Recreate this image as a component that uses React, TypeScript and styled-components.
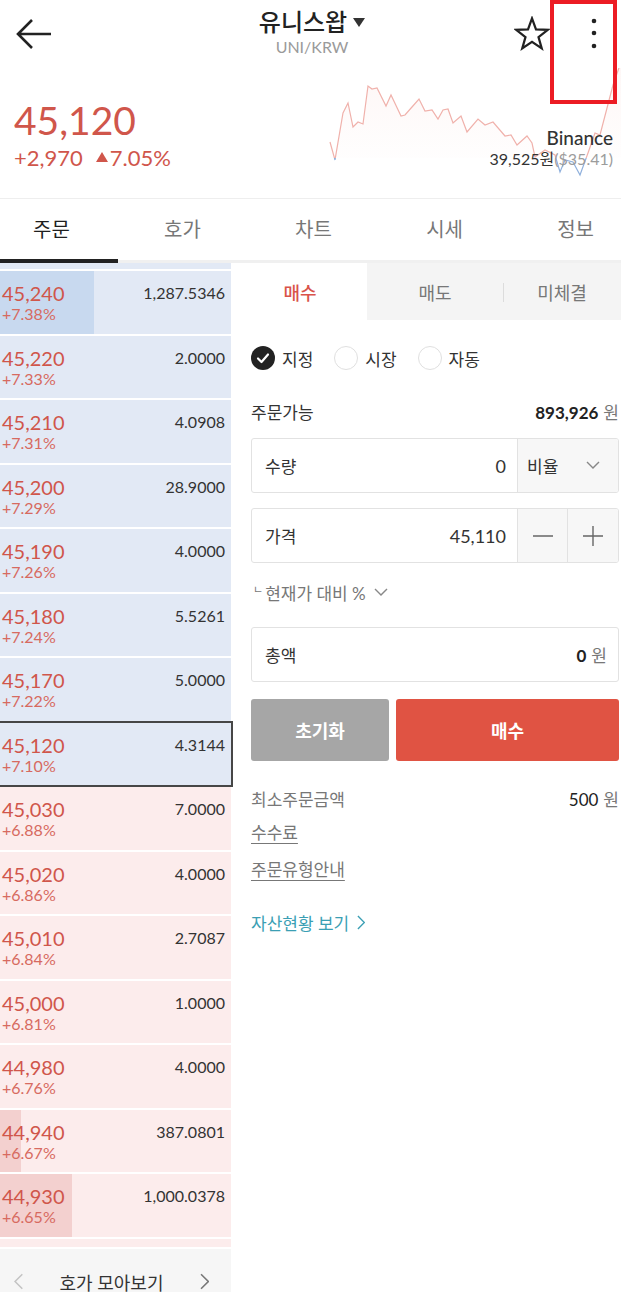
import React from "react";
import styled, { createGlobalStyle, css } from "styled-components";

const GlobalStyle = createGlobalStyle`
  html, body {
    margin: 0;
    padding: 0;
    background: #fff;
  }
  body {
    font-family: Lato, "Noto Sans CJK KR", "Noto Sans", sans-serif;
    color: #222;
  }
  * {
    box-sizing: border-box;
  }
`;

const Page = styled.div`
  position: relative;
  width: 621px;
  height: 1292px;
  overflow: hidden;
  background: #fff;
`;

const Highlight = styled.div`
  position: absolute;
  left: 550px;
  top: 0;
  width: 67px;
  height: 104px;
  border: 4px solid #ec1c24;
  pointer-events: none;
  z-index: 5;
`;

/* ---------- header ---------- */

const TopBar = styled.header`
  display: grid;
  grid-template-columns: 1fr auto 1fr;
  align-items: center;
  height: 68px;
  padding: 0 21px 0 16px;
`;

const IconButton = styled.div`
  display: flex;
  align-items: center;
`;

const TitleBlock = styled.div`
  display: flex;
  flex-direction: column;
  align-items: center;
  padding-left: 8px;
  margin-top: -4px;
`;

const Title = styled.div`
  display: flex;
  align-items: center;
  gap: 6px;
  font-size: 24px;
  line-height: 28px;
  font-weight: 500;
  color: #222;
`;

const Caret = styled.span`
  width: 0;
  height: 0;
  border-left: 6px solid transparent;
  border-right: 6px solid transparent;
  border-top: 9px solid #333;
  margin-top: 2px;
`;

const Pair = styled.div`
  font-size: 16px;
  line-height: 20px;
  color: #9a9a9a;
  margin-top: 1px;
`;

const RightIcons = styled.div`
  display: flex;
  justify-content: flex-end;
  align-items: center;
  gap: 38px;
`;

const PriceSection = styled.section`
  display: flex;
  height: 131px;
  padding-left: 14px;
  border-bottom: 1px solid #eee;
`;

const PriceBlock = styled.div`
  display: flex;
  flex-direction: column;
  padding-top: 30px;
  color: #d0564b;
`;

const BigPrice = styled.div`
  font-size: 39px;
  line-height: 44px;
`;

const Change = styled.div`
  display: flex;
  align-items: center;
  gap: 13px;
  margin-top: 3px;
  font-size: 22px;
  line-height: 26px;
`;

const Up = styled.span`
  display: inline-flex;
  align-items: center;
  gap: 2px;

  &::before {
    content: "";
    border-left: 6px solid transparent;
    border-right: 6px solid transparent;
    border-bottom: 10px solid #d0564b;
    margin-bottom: 3px;
  }
`;

const Chart = styled.div`
  position: relative;
  margin-left: auto;
  width: 296px;
  height: 130px;

  svg {
    display: block;
  }
`;

const Exchange = styled.div`
  position: absolute;
  right: 8px;
  top: 59px;
  text-align: right;
`;

const ExchangeName = styled.div`
  font-size: 19px;
  line-height: 22px;
  font-weight: 500;
  color: #333;
`;

const ExchangePrice = styled.div`
  font-size: 16px;
  line-height: 20px;
  color: #333;

  span {
    color: #9c9c9c;
  }
`;

/* ---------- tabs ---------- */

const Tabs = styled.nav`
  display: flex;
  justify-content: space-between;
  height: 64px;
  padding: 0 27px 0 33px;
  box-shadow: inset 0 -3px 0 #f0f0f0;
`;

const Tab = styled.div<{ $active?: boolean }>`
  position: relative;
  display: flex;
  align-items: center;
  padding-bottom: 6px;
  font-size: 20px;
  color: ${(p) => (p.$active ? "#1f1f1f" : "#777")};

  ${(p) =>
    p.$active &&
    css`
      &::after {
        content: "";
        position: absolute;
        left: -33px;
        bottom: 0;
        width: 118px;
        height: 4px;
        background: #222;
      }
    `}
`;

/* ---------- order book ---------- */

const Body = styled.div`
  display: grid;
  grid-template-columns: 231px 1fr;
  column-gap: 2px;
`;

const Book = styled.div`
  display: flex;
  flex-direction: column;
  gap: 2px;
`;

const sideColors = {
  ask: { light: "#e2e9f5", dark: "#c8d9ef" },
  bid: { light: "#fcecec", dark: "#f3d0cf" },
};

type Side = "ask" | "bid";

const Slice = styled.div<{ $side: Side; $h: number }>`
  height: ${(p) => p.$h}px;
  background: ${(p) => sideColors[p.$side].light};
`;

const Row = styled.div<{ $side: Side; $bar: number; $current?: boolean }>`
  display: flex;
  justify-content: space-between;
  height: 62.5px;
  padding: 10px 6px 0 2px;
  background: linear-gradient(
    to right,
    ${(p) => sideColors[p.$side].dark} 0 ${(p) => p.$bar}px,
    ${(p) => sideColors[p.$side].light} ${(p) => p.$bar}px 100%
  );

  ${(p) =>
    p.$current &&
    css`
      position: relative;
      z-index: 1;
      outline: 2px solid #464646;
      outline-offset: 0px;
    `}
`;

const PriceCell = styled.div`
  display: flex;
  flex-direction: column;
`;

const RowPrice = styled.span`
  font-size: 20px;
  line-height: 24px;
  color: #d0564b;
`;

const RowPct = styled.span`
  font-size: 16px;
  line-height: 18px;
  color: #d76a60;
`;

const RowQty = styled.span`
  font-size: 16px;
  line-height: 24px;
  color: #333;
`;

const BookFooter = styled.div`
  display: flex;
  justify-content: space-between;
  align-items: flex-start;
  height: 70px;
  padding: 24px 22px 0 14px;
  background: #f6f6f6;
  font-size: 18px;
  line-height: 20px;
  color: #333;
`;

/* ---------- order panel ---------- */

const Panel = styled.div`
  display: flex;
  flex-direction: column;
`;

const SideTabs = styled.div`
  display: grid;
  grid-template-columns: 134px 136px 1fr;
  height: 57px;
`;

const SideTab = styled.div<{ $active?: boolean; $divider?: boolean }>`
  position: relative;
  display: flex;
  align-items: center;
  justify-content: center;
  font-size: 18px;
  background: ${(p) => (p.$active ? "#fff" : "#f4f4f4")};
  color: ${(p) => (p.$active ? "#d9534a" : "#777")};
  font-weight: ${(p) => (p.$active ? 500 : 400)};

  ${(p) =>
    p.$divider &&
    css`
      &::before {
        content: "";
        position: absolute;
        left: 0;
        top: 20px;
        width: 1px;
        height: 19px;
        background: #dcdcdc;
      }
    `}
`;

const Form = styled.div`
  display: flex;
  flex-direction: column;
  padding: 0 2px 0 18px;
`;

const Choices = styled.div`
  display: flex;
  align-items: center;
  height: 36px;
  margin-top: 20px;
`;

const Choice = styled.div`
  display: flex;
  align-items: center;
  gap: 7px;
  margin-right: 21px;
  font-size: 17px;
  color: #333;
`;

const Radio = styled.span<{ $on?: boolean }>`
  display: flex;
  align-items: center;
  justify-content: center;
  width: 24px;
  height: 24px;
  border-radius: 50%;
  background: ${(p) => (p.$on ? "#222" : "#fff")};
  border: ${(p) => (p.$on ? "none" : "1px solid #e0e0e0")};
`;

const InfoRow = styled.div<{ $gap: number; $muted?: boolean }>`
  display: flex;
  justify-content: space-between;
  align-items: center;
  height: 26px;
  margin-top: ${(p) => p.$gap}px;
  font-size: 17px;
  color: ${(p) => (p.$muted ? "#777" : "#333")};
`;

const Amount = styled.span<{ $weight?: number }>`
  color: #222;
  font-size: 17px;
  font-weight: ${(p) => p.$weight ?? 400};

  small {
    font-size: 17px;
    font-weight: 400;
    color: #777;
    margin-left: 5px;
  }
`;

const Field = styled.div<{ $gap: number }>`
  display: flex;
  height: 55px;
  margin-top: ${(p) => p.$gap}px;
  border: 1px solid #e2e2e2;
  border-radius: 3px;
  overflow: hidden;
`;

const FieldMain = styled.div`
  flex: 1;
  display: flex;
  align-items: center;
  justify-content: space-between;
  padding: 0 11px 0 13px;
  font-size: 17px;
  color: #333;
`;

const FieldValue = styled.span`
  font-size: 18px;
  color: #333;
`;

const FieldSide = styled.div<{ $w: number; $spread?: boolean }>`
  display: flex;
  align-items: center;
  justify-content: ${(p) => (p.$spread ? "space-between" : "center")};
  width: ${(p) => p.$w}px;
  padding: ${(p) => (p.$spread ? "0 18px 0 9px" : "0")};
  background: #f7f7f7;
  border-left: 1px solid #e2e2e2;
  font-size: 17px;
  color: #333;
`;

const Compare = styled.div`
  display: flex;
  align-items: center;
  gap: 8px;
  height: 24px;
  margin-top: 17px;
  font-size: 17px;
  color: #777;
`;

const CompareMark = styled.span`
  font-size: 11px;
  line-height: 11px;
  align-self: flex-start;
  margin: 4px -6px 0 2px;
`;

const Buttons = styled.div`
  display: grid;
  grid-template-columns: 138px 1fr;
  gap: 7px;
  height: 62px;
  margin-top: 17px;
`;

const Button = styled.div<{ $tone: "gray" | "red" }>`
  display: flex;
  align-items: center;
  justify-content: center;
  border-radius: 3px;
  font-size: 18px;
  font-weight: 700;
  color: #fff;
  background: ${(p) => (p.$tone === "red" ? "#e05343" : "#a6a6a6")};
`;

const LinkText = styled.div<{ $gap: number }>`
  height: 24px;
  margin-top: ${(p) => p.$gap}px;
  font-size: 17px;
  line-height: 24px;
  color: #777;
  text-decoration: underline;
  text-underline-offset: 4px;
`;

const AssetLink = styled.div`
  display: flex;
  align-items: center;
  gap: 8px;
  height: 24px;
  margin-top: 28px;
  font-size: 17px;
  color: #3b9fb4;
`;

/* ---------- data ---------- */

type BookRow = { price: string; pct: string; qty: string; side: Side; bar: number; current?: boolean };

const rows: BookRow[] = [
  { price: "45,240", pct: "+7.38%", qty: "1,287.5346", side: "ask", bar: 94 },
  { price: "45,220", pct: "+7.33%", qty: "2.0000", side: "ask", bar: 0 },
  { price: "45,210", pct: "+7.31%", qty: "4.0908", side: "ask", bar: 0 },
  { price: "45,200", pct: "+7.29%", qty: "28.9000", side: "ask", bar: 0 },
  { price: "45,190", pct: "+7.26%", qty: "4.0000", side: "ask", bar: 0 },
  { price: "45,180", pct: "+7.24%", qty: "5.5261", side: "ask", bar: 0 },
  { price: "45,170", pct: "+7.22%", qty: "5.0000", side: "ask", bar: 0 },
  { price: "45,120", pct: "+7.10%", qty: "4.3144", side: "ask", bar: 0, current: true },
  { price: "45,030", pct: "+6.88%", qty: "7.0000", side: "bid", bar: 0 },
  { price: "45,020", pct: "+6.86%", qty: "4.0000", side: "bid", bar: 0 },
  { price: "45,010", pct: "+6.84%", qty: "2.7087", side: "bid", bar: 0 },
  { price: "45,000", pct: "+6.81%", qty: "1.0000", side: "bid", bar: 0 },
  { price: "44,980", pct: "+6.76%", qty: "4.0000", side: "bid", bar: 0 },
  { price: "44,940", pct: "+6.67%", qty: "387.0801", side: "bid", bar: 21 },
  { price: "44,930", pct: "+6.65%", qty: "1,000.0378", side: "bid", bar: 72 },
];

// sparkline points in page coordinates
const spark: [number, number][] = [
  [330, 142], [335, 160], [343, 113], [348, 103], [353, 127], [358, 122], [363, 124],
  [368, 86], [372, 89], [377, 88], [386, 106], [391, 95], [401, 116], [405, 115],
  [412, 107], [419, 99], [425, 111], [432, 110], [438, 119], [443, 110], [448, 109],
  [453, 123], [461, 116], [467, 132], [478, 119], [485, 125], [493, 122], [505, 136],
  [511, 135], [517, 145], [527, 136], [532, 143], [535, 157], [545, 150], [555, 155],
  [560, 172], [565, 160], [573, 162], [580, 175], [588, 153], [595, 133], [600, 135],
  [613, 85], [621, 62],
];

const CHART_X = 325;
const CHART_Y = 68;
const BASE = 158 - CHART_Y;

const sparkPath = spark
  .map(([x, y], i) => `${i === 0 ? "M" : "L"}${x - CHART_X} ${y - CHART_Y}`)
  .join(" ");

/* ---------- icons ---------- */

function BackIcon() {
  return (
    <svg width="36" height="32" viewBox="0 0 36 32" fill="none" stroke="#222" strokeWidth="2.6">
      <path d="M2 16H35M16 2L2 16L16 30" />
    </svg>
  );
}

function StarIcon() {
  return (
    <svg width="36" height="36" viewBox="-1.5 -1.5 37 37" fill="none" stroke="#222" strokeWidth="2.3" strokeLinejoin="miter">
      <path d="M17 1 L21.1 12.3 L33.2 12.7 L23.7 20.2 L27 31.8 L17 25 L7 31.8 L10.3 20.2 L0.8 12.7 L12.9 12.3 Z" />
    </svg>
  );
}

function MoreIcon() {
  return (
    <svg width="12" height="34" viewBox="0 0 12 34" fill="#222">
      <circle cx="6" cy="4" r="2.3" />
      <circle cx="6" cy="16" r="2.3" />
      <circle cx="6" cy="29" r="2.3" />
    </svg>
  );
}

function CheckIcon() {
  return (
    <svg width="24" height="24" viewBox="0 0 24 24" fill="none" stroke="#fff" strokeWidth="2.2" strokeLinecap="round" strokeLinejoin="round">
      <path d="M7 12.5L10.5 16L17 8.5" />
    </svg>
  );
}

function ChevronDown({ color = "#888", w = 14 }: { color?: string; w?: number }) {
  return (
    <svg width={w} height={w * 0.6} viewBox="0 0 14 8.4" fill="none" stroke={color} strokeWidth="1.4">
      <path d="M1 1L7 7L13 1" />
    </svg>
  );
}

function Chevron({ dir, color, h = 16 }: { dir: "left" | "right"; color: string; h?: number }) {
  return (
    <svg width={h * 0.55} height={h} viewBox="0 0 9 16" fill="none" stroke={color} strokeWidth="1.5">
      <path d={dir === "left" ? "M8 1L1 8L8 15" : "M1 1L8 8L1 15"} />
    </svg>
  );
}

function MinusIcon() {
  return (
    <svg width="20" height="20" viewBox="0 0 20 20" stroke="#666" strokeWidth="1.4">
      <path d="M0 10H20" />
    </svg>
  );
}

function PlusIcon() {
  return (
    <svg width="20" height="20" viewBox="0 0 20 20" stroke="#666" strokeWidth="1.4">
      <path d="M0 10H20M10 0V20" />
    </svg>
  );
}

function Sparkline() {
  return (
    <svg width="296" height="130" viewBox="0 0 296 130" fill="none">
      <defs>
        <clipPath id="above">
          <rect x="0" y="0" width="296" height={BASE} />
        </clipPath>
        <clipPath id="below">
          <rect x="0" y={BASE} width="296" height={130 - BASE} />
        </clipPath>
        <linearGradient id="fade" x1="0" y1="0" x2="0" y2="1">
          <stop offset="0" stopColor="#f2b7b1" stopOpacity="0.12" />
          <stop offset="1" stopColor="#f2b7b1" stopOpacity="0" />
        </linearGradient>
      </defs>
      <path d={`${sparkPath} L296 ${BASE} L5 ${BASE} Z`} fill="url(#fade)" clipPath="url(#above)" />
      <path d={sparkPath} stroke="#f0b1ab" strokeWidth="1.2" clipPath="url(#above)" />
      <path d={sparkPath} stroke="#8fb0dc" strokeWidth="1.2" clipPath="url(#below)" />
    </svg>
  );
}

export default function App() {
  return (
    <Page>
      <GlobalStyle />
      <Highlight />

      <TopBar>
        <IconButton>
          <BackIcon />
        </IconButton>
        <TitleBlock>
          <Title>
            유니스왑
            <Caret />
          </Title>
          <Pair>UNI/KRW</Pair>
        </TitleBlock>
        <RightIcons>
          <StarIcon />
          <MoreIcon />
        </RightIcons>
      </TopBar>

      <PriceSection>
        <PriceBlock>
          <BigPrice>45,120</BigPrice>
          <Change>
            <span>+2,970</span>
            <Up>7.05%</Up>
          </Change>
        </PriceBlock>
        <Chart>
          <Sparkline />
          <Exchange>
            <ExchangeName>Binance</ExchangeName>
            <ExchangePrice>
              39,525원<span>($35.41)</span>
            </ExchangePrice>
          </Exchange>
        </Chart>
      </PriceSection>

      <Tabs>
        <Tab $active>주문</Tab>
        <Tab>호가</Tab>
        <Tab>차트</Tab>
        <Tab>시세</Tab>
        <Tab>정보</Tab>
      </Tabs>

      <Body>
        <Book>
          <Slice $side="ask" $h={6} />
          {rows.map((r) => (
            <Row key={r.price} $side={r.side} $bar={r.bar} $current={r.current}>
              <PriceCell>
                <RowPrice>{r.price}</RowPrice>
                <RowPct>{r.pct}</RowPct>
              </PriceCell>
              <RowQty>{r.qty}</RowQty>
            </Row>
          ))}
          <Slice $side="bid" $h={8} />
          <BookFooter>
            <Chevron dir="left" color="#c4c4c4" h={17} />
            <span>호가 모아보기</span>
            <Chevron dir="right" color="#777" h={17} />
          </BookFooter>
        </Book>

        <Panel>
          <SideTabs>
            <SideTab $active>매수</SideTab>
            <SideTab>매도</SideTab>
            <SideTab $divider>미체결</SideTab>
          </SideTabs>

          <Form>
            <Choices>
              <Choice>
                <Radio $on>
                  <CheckIcon />
                </Radio>
                지정
              </Choice>
              <Choice>
                <Radio />
                시장
              </Choice>
              <Choice>
                <Radio />
                자동
              </Choice>
            </Choices>

            <InfoRow $gap={22}>
              <span>주문가능</span>
              <Amount $weight={700}>
                893,926<small>원</small>
              </Amount>
            </InfoRow>

            <Field $gap={14}>
              <FieldMain>
                <span>수량</span>
                <FieldValue>0</FieldValue>
              </FieldMain>
              <FieldSide $w={101} $spread>
                <span>비율</span>
                <ChevronDown />
              </FieldSide>
            </Field>

            <Field $gap={15}>
              <FieldMain>
                <span>가격</span>
                <FieldValue>45,110</FieldValue>
              </FieldMain>
              <FieldSide $w={50}>
                <MinusIcon />
              </FieldSide>
              <FieldSide $w={51}>
                <PlusIcon />
              </FieldSide>
            </Field>

            <Compare>
              <CompareMark>ㄴ</CompareMark>
              <span>현재가 대비 %</span>
              <ChevronDown color="#888" w={14} />
            </Compare>

            <Field $gap={23}>
              <FieldMain>
                <span>총액</span>
                <Amount $weight={700}>
                  0<small>원</small>
                </Amount>
              </FieldMain>
            </Field>

            <Buttons>
              <Button $tone="gray">초기화</Button>
              <Button $tone="red">매수</Button>
            </Buttons>

            <InfoRow $gap={24} $muted>
              <span>최소주문금액</span>
              <Amount>
                500<small>원</small>
              </Amount>
            </InfoRow>

            <LinkText $gap={10}>수수료</LinkText>
            <LinkText $gap={13}>주문유형안내</LinkText>

            <AssetLink>
              자산현황 보기
              <Chevron dir="right" color="#3b9fb4" h={15} />
            </AssetLink>
          </Form>
        </Panel>
      </Body>
    </Page>
  );
}
